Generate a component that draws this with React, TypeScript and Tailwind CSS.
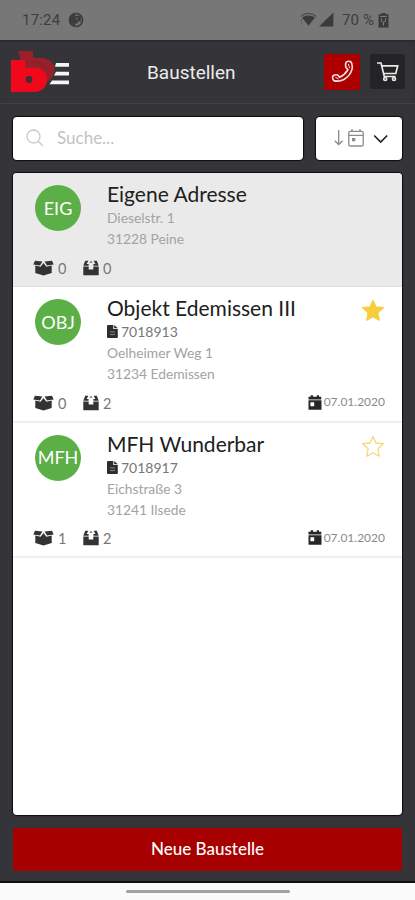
import type { ReactNode } from "react";

type Site = {
  initials: string;
  name: string;
  number?: string;
  street: string;
  city: string;
  open: number;
  outgoing: number;
  date?: string;
  favorite?: boolean;
};

const sites: Site[] = [
  { initials: "EIG", name: "Eigene Adresse", street: "Dieselstr. 1", city: "31228 Peine", open: 0, outgoing: 0 },
  {
    initials: "OBJ",
    name: "Objekt Edemissen III",
    number: "7018913",
    street: "Oelheimer Weg 1",
    city: "31234 Edemissen",
    open: 0,
    outgoing: 2,
    date: "07.01.2020",
    favorite: true,
  },
  {
    initials: "MFH",
    name: "MFH Wunderbar",
    number: "7018917",
    street: "Eichstraße 3",
    city: "31241 Ilsede",
    open: 1,
    outgoing: 2,
    date: "07.01.2020",
    favorite: false,
  },
];

export default function App() {
  return (
    <div className="flex h-[900px] w-[415px] flex-col overflow-hidden bg-[#353438] font-['Lato',sans-serif]">
      <StatusBar />
      <Header />
      <main className="flex min-h-0 flex-1 flex-col px-[13px] pt-[13px] pb-[10px]">
        <div className="flex h-[43px] shrink-0 gap-[13px]">
          <label className="flex flex-1 items-center rounded-[4px] bg-white pb-[2px] pl-[13px] shadow-[0_0_1px_1px_#0c0c10]">
            <SearchIcon />
            <input placeholder="Suche..." className="ml-[13px] w-full text-[17px] outline-none placeholder:text-[#c2c2c2]" />
          </label>
          <button className="flex w-[86px] items-center rounded-[4px] bg-white pb-[1px] pl-[18px] shadow-[0_0_1px_1px_#0c0c10]">
            <SortIcon />
          </button>
        </div>
        <div className="mt-[13px] h-[642px] shrink-0 overflow-hidden rounded-[4px] bg-white shadow-[0_0_1px_1px_#0c0c10]">
          {sites.map((site) => (
            <SiteRow key={site.initials} site={site} />
          ))}
        </div>
        <button className="mt-[13px] h-[43px] shrink-0 rounded-[3px] bg-[#a60000] pb-[2px] text-[17px] font-medium text-white">
          Neue Baustelle
        </button>
      </main>
      {/* system navigation */}
      <div className="flex h-[19px] shrink-0 justify-center border-t-2 border-[#101012] bg-[#fafafa] pt-[7px]">
        <div className="h-[3px] w-[164px] rounded-full bg-[#a2a2a2]" />
      </div>
    </div>
  );
}

function StatusBar() {
  return (
    <div className="flex h-10 shrink-0 items-center bg-[#777777] pr-[26px] pl-[22px] font-['Roboto',sans-serif] text-[15px] text-[#3d3d3d]">
      <span className="tracking-[0.2px]">17:24</span>
      <svg width="16" height="16" viewBox="0 0 16 16" className="ml-2">
        <circle cx="8" cy="8" r="6.5" fill="none" stroke="#3d3d3d" strokeWidth="1.7" />
        <path d="M2 5 L5 2 H7.2 V14 Q3 13 2 10 Z M7.2 3.8 H12.8 V9.4 H9.8 V11.5 H7.2 Z" fill="#3d3d3d" />
        <path d="M8.8 5.5 V8" stroke="#777" strokeWidth="1" />
      </svg>
      <svg width="34" height="16" viewBox="0 0 34 16" className="ml-auto">
        <path d="M.7 4.4 Q8.5 -1.6 16.3 4.4" fill="none" stroke="#4c4c4c" strokeWidth="1.2" />
        <path d="M2 5.6 Q8.5 1.2 15 5.6 L8.5 13.8 Z" fill="#3a3a3a" />
        <path d="M1.5 7 V13" stroke="#555" strokeDasharray="1.5 1.5" />
        <path d="M33.4 .6 V14.4 H19 Z" fill="#3a3a3a" />
      </svg>
      <span className="ml-[8px] tracking-[0.1px]">70 %</span>
      <svg width="11" height="15" viewBox="0 0 11 15" className="ml-[4px]">
        <path d="M3.3 0 H7.7 V1.3 H10.5 V14.5 H.5 V1.3 H3.3 Z" fill="#3a3a3a" />
        <path d="M2.2 3.4 H8.8 M3.5 5.4 V7.5 Q3.7 9 5.5 9.3 V12.5 M7.5 5.4 V7.5 Q7.3 9 5.5 9.3" fill="none" stroke="#858585" />
      </svg>
    </div>
  );
}

function Header() {
  return (
    <header className="flex h-16 shrink-0 items-center border-b border-[#414145] pr-[10px] pl-[11px] shadow-[inset_0_2px_1px_#2c2c30]">
      <Logo />
      <h1 className="mt-[3px] ml-[75px] font-['Roboto',sans-serif] text-[19px] text-[#ececec]">Baustellen</h1>
      <button className="ml-auto flex size-9 items-center justify-center rounded-[2px] bg-[#ac0000]">
        <svg width="23" height="23" viewBox="0 0 24 24" fill="none" stroke="#f7dfdf" strokeWidth="1.7" strokeLinejoin="round">
          <path d="M15.8 2.2 Q18 .8 20.5 1.7 Q22.8 4 22 9.5 Q20 16.5 13.5 20.3 Q8 23 3 21.5 Q1.2 19.5 1.8 16.8 Q4 15 7 15.6 L9 18 Q14.2 15.7 17.7 10.2 L15.5 7.6 Q14.8 4.5 15.8 2.2 Z" />
          <path d="M4.5 18 L8 19.8 M18 4 L19.5 8.5" strokeWidth="1" />
        </svg>
      </button>
      <button className="ml-[10px] flex size-[35px] items-center justify-center rounded-[2px] bg-[#242427]">
        <svg width="22" height="20" viewBox="0 0 22 20" fill="none" stroke="#e8e8e8" strokeWidth="1.7">
          <path d="M0 1 H4 L7.3 14.5 H18.5 M4.6 3.8 H20.7 L18.8 11.5 H6.5" />
          <circle cx="8.2" cy="17" r="1.5" />
          <circle cx="17" cy="17" r="1.5" />
        </svg>
      </button>
    </header>
  );
}

function Logo() {
  return (
    <svg width="61" height="44" viewBox="0 0 61 44">
      <path d="M7 1 H22 V8 H30 C38 8 44 13 43.5 20 C43 27 38 31 34 34 L15 31 Z" fill="#99202a" />
      <path d="M20 12 Q31 11 35 19" fill="none" stroke="#85202a" strokeWidth="1.5" />
      <path d="M0 10 H14 V18 H24 C31 18 36 22 36 29 C36 37 31 42 23 42 H0 Z" fill="#f1081b" />
      <circle cx="18" cy="29.5" r="3.4" fill="#3f2f37" />
      <g fill="#f5f5f5">
        <path d="M45 13 H58 V16.8 H44 Z" />
        <path d="M45 21.8 H58 V25.6 H43 Z" />
        <path d="M41 30.5 H58 V34.3 H38.5 Z" />
      </g>
    </svg>
  );
}

function SiteRow({ site }: { site: Site }) {
  return (
    <article
      className={
        site.number
          ? "flex h-[135.5px] flex-col border-b-2 border-[#efefef] bg-white pt-[8px]"
          : "flex h-[114px] flex-col border-b border-[#dedede] bg-[#eaeaea] pt-[8px]"
      }
    >
      <div className="flex pr-[17px] pl-[22px]">
        <div className="mt-[4px] flex size-[46px] shrink-0 items-center justify-center rounded-full bg-[#5baf46] text-[18px] text-white">
          {site.initials}
        </div>
        <div className="ml-[26px] min-w-0 flex-1 whitespace-nowrap">
          <h2 className="text-[21px] leading-[26px] text-[#202020]">{site.name}</h2>
          {site.number && (
            <p className="flex h-[21px] items-center gap-[3px] text-[14px] text-[#777]">
              <FileIcon />
              {site.number}
            </p>
          )}
          <p className="text-[13.8px] leading-[21px] text-[#a3a3a3]">{site.street}</p>
          <p className="text-[13.8px] leading-[21px] text-[#a3a3a3]">{site.city}</p>
        </div>
        {site.date && <StarIcon filled={site.favorite} />}
      </div>
      <div className="mt-[9px] flex h-[20px] items-center pr-[17px] pl-[20px]">
        <Count value={site.open} className="w-[50px]">
          <BoxIcon />
        </Count>
        <Count value={site.outgoing} className="w-[40px]">
          <OutboxIcon />
        </Count>
        {site.date && (
          <span className="mb-[2px] ml-auto flex items-center gap-[2px] text-[12px] text-[#8a8a8a]">
            <CalendarIcon />
            {site.date}
          </span>
        )}
      </div>
    </article>
  );
}

function Count({ value, className, children }: { value: number; className: string; children: ReactNode }) {
  return (
    <span className={`mb-px flex items-center gap-1 text-[14.5px] text-[#777] ${className}`}>
      {children}
      <span className="mt-[2px]">{value}</span>
    </span>
  );
}

function SearchIcon() {
  return (
    <svg width="18" height="18" viewBox="0 0 18 18" fill="none" stroke="#c8c8c8" strokeWidth="1.3" className="shrink-0">
      <circle cx="7.5" cy="7.5" r="6.5" />
      <path d="M12.3 12.3 L17 17" />
    </svg>
  );
}

function SortIcon() {
  return (
    <svg width="56" height="20" viewBox="0 0 56 20" fill="none" stroke="#8c8c8c" strokeWidth="1.3">
      <path d="M4.7 2 V16.3 M.8 12.7 L4.7 16.5 L8.6 12.7" />
      <rect x="14.8" y="3.3" width="14.4" height="14.7" rx="1.3" />
      <path d="M14.8 7.3 H29.2 M18 1 V4 M26 1 V4" />
      <rect x="18" y="10" width="3.3" height="3.3" fill="#8c8c8c" stroke="none" />
      <path d="M40.2 7.5 L46.7 14 L53.2 7.5" stroke="#222" strokeWidth="1.7" />
    </svg>
  );
}

function FileIcon() {
  return (
    <svg width="11" height="13" viewBox="0 0 11 14" preserveAspectRatio="none">
      <path d="M0 1 Q0 0 1 0 H6.3 V4.2 H10.8 V13 Q10.8 14 10 14 H1 Q0 14 0 13 Z M7.2 0 L10.8 3.4 H7.2 Z" fill="#2d2d2d" />
      <path d="M3 7.5 H8 M3 10.3 H8" stroke="#999" strokeWidth=".9" />
    </svg>
  );
}

function BoxIcon() {
  return (
    <svg width="21" height="16" viewBox="0 0 21 16" fill="#333">
      <path d="M2 .7 L9.4 1.4 L7 5.4 L.3 4.4 Z M19 .7 L11.6 1.4 L14 5.4 L20.7 4.4 Z" />
      <path d="M2.3 5.6 L7.6 6.8 L10.5 3 L13.4 6.8 L18.7 5.6 V13 L10.5 15.4 L2.3 13 Z" />
    </svg>
  );
}

function OutboxIcon() {
  return (
    <svg width="16" height="16" viewBox="0 0 16 16" fill="#333">
      <path d="M2.2 .8 H5.4 L3.6 4 H5.6 V5.8 H.3 Z M13.8 .8 H10.6 L12.4 4 H10.4 V5.8 H15.7 Z" />
      <path d="M.3 6.6 H5.7 V9.4 H10.3 V6.6 H15.7 V15.3 H.3 Z" />
      <path d="M8 .8 L9.8 2.8 H6.2 Z" fill="#777" />
    </svg>
  );
}

function CalendarIcon() {
  return (
    <svg width="14" height="15" viewBox="0 0 14 15" fill="#262626">
      <path d="M.5 1.8 H2.7 V.3 H5 V1.8 H8.8 V.3 H11 V1.8 H13.3 V4.5 H.5 Z" />
      <path d="M.5 5.2 H13.5 V14.7 H.5 Z M2.4 7.3 V11.2 H6.2 V7.3 Z" fillRule="evenodd" />
    </svg>
  );
}

function StarIcon({ filled }: { filled?: boolean }) {
  return (
    <svg width="24" height="23" viewBox="0 0 24 23" className="mt-[4px] shrink-0">
      <path
        d="M12 1.6 L14.9 8 L22.3 8.7 L16.9 13.8 L18.2 21.2 L12 17.8 L5.8 21.2 L7.1 13.8 L1.7 8.7 L9.1 8 Z"
        fill={filled ? "#f7ce3b" : "none"}
        stroke={filled ? "#f7ce3b" : "#f5d878"}
        strokeWidth="1.3"
        strokeLinejoin="round"
      />
    </svg>
  );
}
